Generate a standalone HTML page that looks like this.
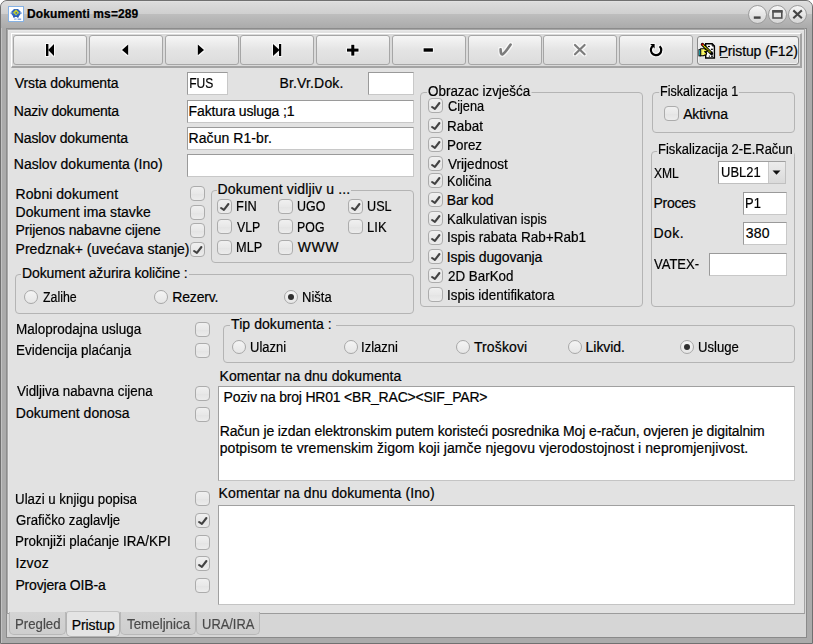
<!DOCTYPE html><html><head><meta charset="utf-8"><style>
*{margin:0;padding:0;box-sizing:border-box}
html,body{width:813px;height:644px;overflow:hidden;background:#fff}
body{position:relative;font-family:"Liberation Sans",sans-serif}
.abs,.t,.cb,.rb,.inp,.grp,.btn,.ta,.tab,.combo{position:absolute}
.t{font-size:14px;line-height:15px;white-space:pre;color:#000;-webkit-text-stroke:0.2px currentColor}
.bold{font-weight:bold;font-size:12px}
.gray{color:#4a4a4a}
.win{position:absolute;left:0;top:0;width:813px;height:644px;background:#ababab;border:1px solid #707070;border-radius:7px 7px 0 0;box-shadow:inset 1px 0 0 #c2c2c2}
.title{position:absolute;left:1px;top:1px;width:811px;height:27px;border-radius:6px 6px 0 0;
 background:linear-gradient(#e6e6e6 0,#dcdcdc 1px,#cfcfcf 13px,#bdbdbd 13.5px,#ababab 27px)}
.ticon{position:absolute;left:8px;top:6px;width:16px;height:16px;background:#fff;border:1px solid #86b2e4;padding:0}
.ticon svg{position:absolute;left:0;top:0}
.tbtn{position:absolute;width:19px;height:19px;border-radius:50%;border:1px solid #9c9c9c;background:linear-gradient(#f6f6f6,#d6d6d6)}
.pane{position:absolute;left:6px;top:28px;width:799px;height:586px;background:#e2e2e2;border:1px solid #8c8c8c;border-right-color:#a4a4a4;border-bottom-color:#9c9c9c;box-shadow:inset 1px 1px 0 #a8a8a8,inset 2px 2px 0 #e8e8e8}
.tbar{position:absolute;left:11px;top:33px;width:791px;height:35px;background:#dadada;border-top:1px solid #fff;border-left:1px solid #fff;border-bottom:2px solid #a4a4a4;border-right:2px solid #a4a4a4}
.btn{border:1px solid #a6a6a6;border-radius:3px;background:linear-gradient(#f6f6f6,#e4e4e4 50%,#dcdcdc)}
.btn2{border-color:#8a8a8a;box-shadow:inset 0 0 0 1px #f0f0f0}
.cb{border:1px solid #acacac;border-radius:4px;background:linear-gradient(#f0f0f0,#e8e8e8 50%,#e4e4e4 55%,#ececec)}
.cb svg{position:absolute;left:-1px;top:-1px}
.rb{border:1px solid #a8a8a8;border-radius:50%;background:linear-gradient(#f4f4f4,#e6e6e6)}
.dot{position:absolute;left:3px;top:3px;width:6px;height:6px;border-radius:50%;background:#303030}
.inp{background:#fff;border:1px solid #c8c8c8;border-top-color:#9a9a9a;border-left-color:#9a9a9a}
.ta{background:#fff;border:1px solid #c4c4c4;border-top-color:#a0a0a0;border-left-color:#a0a0a0}
.grp{border:1px solid #b4b4b4;border-radius:4px}
.gt{background:#e2e2e2;padding:0 1px}
.combo{background:#fff;border:1px solid #c0c0c0;border-top-color:#a0a0a0;border-left-color:#a0a0a0}
.cdrop{position:absolute;right:0;top:0;width:17px;height:21px;background:linear-gradient(#ececec,#dadada);border-left:1px solid #c8c8c8}
.tab{background:linear-gradient(#d4d4d4,#cecece);border:1px solid #b8b8b8;border-top:none;border-radius:0 0 5px 5px}
.tabsel{background:#e4e4e4;border-color:#b4b4b4;border-top:1px solid #c4c4c4;border-radius:3px 3px 5px 5px}
.tabbar{position:absolute;left:6px;top:28px;width:801px;height:610px;background:#d6d6d6;border:1px solid #8a8a8a}
#t0{margin-left:-1px;letter-spacing:0.100px}#t1{margin-left:-1px;letter-spacing:-0.142px}#t2{margin-left:0px;letter-spacing:-0.107px}#t3{margin-left:-1px;letter-spacing:0.167px}#t4{margin-left:-1px;letter-spacing:-0.207px}#t5{margin-left:-1px;letter-spacing:-0.113px}#t6{margin-left:-1px;letter-spacing:0.010px}#t7{margin-left:-1px;transform:scaleX(0.8593);transform-origin:1px 0}#t8{margin-left:-1px;letter-spacing:-0.138px}#t9{margin-left:-1px;letter-spacing:0.064px}#t10{margin-left:-1px;letter-spacing:0.038px}#t11{margin-left:-1px;letter-spacing:0.028px}#t12{margin-left:-1px;letter-spacing:-0.159px}#t13{margin-left:-1px;letter-spacing:0.000px}#t14{margin-left:-2px;letter-spacing:0.162px}#t15{margin-left:-1px;transform:scaleX(0.9143);transform-origin:1px 0}#t16{margin-left:-1px;transform:scaleX(0.8903);transform-origin:1px 0}#t17{margin-left:-1px;transform:scaleX(0.9000);transform-origin:1px 0}#t18{margin-left:0px;transform:scaleX(0.8808);transform-origin:0px 0}#t19{margin-left:-1px;transform:scaleX(0.8800);transform-origin:1px 0}#t20{margin-left:-1px;transform:scaleX(0.9250);transform-origin:1px 0}#t21{margin-left:-1px;transform:scaleX(0.9111);transform-origin:1px 0}#t22{margin-left:0px;letter-spacing:0.550px}#t23{margin-left:-2px;letter-spacing:-0.123px}#t24{margin-left:0px;transform:scaleX(0.8816);transform-origin:0px 0}#t25{margin-left:-1px;letter-spacing:-0.150px}#t26{margin-left:-1px;transform:scaleX(0.9258);transform-origin:1px 0}#t27{margin-left:-1px;transform:scaleX(0.9589);transform-origin:1px 0}#t28{margin-left:0px;transform:scaleX(0.9100);transform-origin:0px 0}#t29{margin-left:-1px;transform:scaleX(0.9595);transform-origin:1px 0}#t30{margin-left:-1px;transform:scaleX(0.9571);transform-origin:1px 0}#t31{margin-left:0px;transform:scaleX(0.9694);transform-origin:0px 0}#t32{margin-left:-1px;transform:scaleX(0.9021);transform-origin:1px 0}#t33{margin-left:-1px;letter-spacing:-0.233px}#t34{margin-left:-1px;transform:scaleX(0.9292);transform-origin:1px 0}#t35{margin-left:-1px;transform:scaleX(0.9683);transform-origin:1px 0}#t36{margin-left:-1px;letter-spacing:-0.121px}#t37{margin-left:0px;transform:scaleX(0.9559);transform-origin:0px 0}#t38{margin-left:-1px;transform:scaleX(0.9577);transform-origin:1px 0}#t39{margin-left:-2px;transform:scaleX(0.8953);transform-origin:2px 0}#t40{margin-left:0px;letter-spacing:-0.183px}#t41{margin-left:-2px;transform:scaleX(0.9257);transform-origin:2px 0}#t42{margin-left:0px;transform:scaleX(0.8621);transform-origin:0px 0}#t43{margin-left:-1px;transform:scaleX(0.9238);transform-origin:1px 0}#t44{margin-left:-1px;letter-spacing:-0.220px}#t45{margin-left:-1px;transform:scaleX(0.9250);transform-origin:1px 0}#t46{margin-left:-1px;letter-spacing:0.500px}#t47{margin-left:0px;letter-spacing:0.250px}#t48{margin-left:0px;transform:scaleX(0.9292);transform-origin:0px 0}#t49{margin-left:-1px;transform:scaleX(0.9628);transform-origin:1px 0}#t50{margin-left:-1px;transform:scaleX(0.9605);transform-origin:1px 0}#t51{margin-left:0px;transform:scaleX(0.9538);transform-origin:0px 0}#t52{margin-left:-1px;letter-spacing:0.014px}#t53{margin-left:-1px;letter-spacing:0.057px}#t54{margin-left:-1px;transform:scaleX(0.9243);transform-origin:1px 0}#t55{margin-left:-1px;transform:scaleX(0.9263);transform-origin:1px 0}#t56{margin-left:0px;letter-spacing:0.129px}#t57{margin-left:-1px;letter-spacing:-0.050px}#t58{margin-left:-1px;transform:scaleX(0.9357);transform-origin:1px 0}#t59{margin-left:-1px;letter-spacing:0.046px}#t60{margin-left:-1px;letter-spacing:-0.209px}#t61{margin-left:-1px;letter-spacing:-0.111px}#t62{margin-left:-1px;letter-spacing:0.070px}#t63{margin-left:-1px;letter-spacing:0.093px}#t64{margin-left:-1px;transform:scaleX(0.9492);transform-origin:1px 0}#t65{margin-left:0px;transform:scaleX(0.9427);transform-origin:0px 0}#t66{margin-left:-1px;transform:scaleX(0.9565);transform-origin:1px 0}#t67{margin-left:-1px;letter-spacing:0.150px}#t68{margin-left:-1px;letter-spacing:-0.177px}#t69{margin-left:-1px;transform:scaleX(0.9426);transform-origin:1px 0}#t70{margin-left:-1px;letter-spacing:-0.083px}#t71{margin-left:0px;transform:scaleX(0.9545);transform-origin:0px 0}#t72{margin-left:-1px;transform:scaleX(0.9196);transform-origin:1px 0}</style></head><body><div class="win"></div>
<div class="title"></div>
<div class="ticon"><svg width="14" height="14" viewBox="0 0 14 14"><path d="M5 2 L9 2 L11.2 4.2 L11.2 7.8 L9 10 L5 10 L2.8 7.8 L2.8 4.2 Z" fill="#2f66c0"/><rect x="1.6" y="5.4" width="11" height="1.4" fill="#4a7ed0"/><circle cx="5" cy="9.8" r="1" fill="#2a5ab0"/><circle cx="8.8" cy="9.8" r="1" fill="#2a5ab0"/><path d="M7 2.6 L10 5.6 L7 8.6 L4 5.6 Z" fill="#c6d22a"/><circle cx="7.3" cy="5.9" r=".9" fill="#2f66c0"/><rect x="5" y="11.6" width="2.6" height="1" fill="#7ea6dc"/><rect x="8.6" y="11.6" width="3.6" height="1.1" fill="#5a8ad8"/></svg></div>
<div id="t0" class="t bold" style="left:28.0px;top:7.3px;">Dokumenti ms=289</div>
<div class="tbtn" style="left:748.0px;top:4.5px"></div>
<div class="tbtn" style="left:768.0px;top:4.5px"></div>
<div class="tbtn" style="left:788.0px;top:4.5px"></div>
<svg class="abs" style="left:748px;top:4px" width="60" height="20" viewBox="0 0 60 20"><rect x="5.8" y="12.4" width="6.8" height="2.4" fill="#454545"/><rect x="25" y="7.4" width="8.8" height="6.6" fill="none" stroke="#505050" stroke-width="1.6"/><rect x="24.2" y="6" width="10.4" height="2.6" fill="#505050"/><path d="M46.1 7.1 L53.1 13.5 M53.1 7.1 L46.1 13.5" stroke="#454545" stroke-width="2.1" stroke-linecap="square"/></svg>
<div class="tabbar"></div>
<div class="pane"></div>
<div class="tbar"></div>
<div class="btn" style="left:13px;top:35px;width:74px;height:30px;"></div>
<div class="btn" style="left:89px;top:35px;width:74px;height:30px;"></div>
<div class="btn" style="left:165px;top:35px;width:74px;height:30px;"></div>
<div class="btn" style="left:240px;top:35px;width:74px;height:30px;"></div>
<div class="btn" style="left:316px;top:35px;width:74px;height:30px;"></div>
<div class="btn" style="left:392px;top:35px;width:74px;height:30px;"></div>
<div class="btn" style="left:468px;top:35px;width:74px;height:30px;"></div>
<div class="btn" style="left:543px;top:35px;width:74px;height:30px;"></div>
<div class="btn" style="left:619px;top:35px;width:74px;height:30px;"></div>
<div class="btn btn2" style="left:697px;top:36px;width:102px;height:29px;"></div>
<svg class="abs" style="left:0;top:0" width="813" height="70" viewBox="0 0 813 70"><g opacity=".75" filter="url(#halo)"><rect x="46" y="44" width="2.4" height="12" fill="#fff"/><path d="M48.2 50 L54 44 L54 56 Z" fill="#fff"/><path d="M122 50 L128.2 44.6 L128.2 55.2 Z" fill="#fff"/><path d="M204 50 L197.8 44.6 L197.8 55.2 Z" fill="#fff"/><path d="M279.6 50 L273 44 L273 56 Z" fill="#fff"/><rect x="279" y="44" width="2.2" height="12" fill="#fff"/><rect x="347" y="48.6" width="11.5" height="3" fill="#fff"/><rect x="351.3" y="44.8" width="3" height="10.8" fill="#fff"/><rect x="423.6" y="48.3" width="9.3" height="3.4" fill="#fff"/><path d="M500.6 49.2 Q500.6 54.6 502.4 54.4 Q504.2 54 510.6 44.6" fill="none" stroke="#fff" stroke-width="2.6" stroke-linecap="round"/><path d="M575 45 L584.6 54.3 M584.6 45 L575 54.3" stroke="#fff" stroke-width="2.2" stroke-linecap="round"/><path d="M659.6 46.2 A5.2 5.2 0 1 1 653.3 45.6" fill="none" stroke="#fff" stroke-width="2.2"/><path d="M650.2 44 L654.6 44 L654.6 48.4 Z" fill="#fff"/></g><rect x="46" y="44" width="2.4" height="12" fill="#000"/><path d="M48.2 50 L54 44 L54 56 Z" fill="#000"/><path d="M122 50 L128.2 44.6 L128.2 55.2 Z" fill="#000"/><path d="M204 50 L197.8 44.6 L197.8 55.2 Z" fill="#000"/><path d="M279.6 50 L273 44 L273 56 Z" fill="#000"/><rect x="279" y="44" width="2.2" height="12" fill="#000"/><rect x="347" y="48.6" width="11.5" height="3" fill="#000"/><rect x="351.3" y="44.8" width="3" height="10.8" fill="#000"/><rect x="423.6" y="48.3" width="9.3" height="3.4" fill="#000"/><path d="M500.6 49.2 Q500.6 54.6 502.4 54.4 Q504.2 54 510.6 44.6" fill="none" stroke="#7c7c7c" stroke-width="2.6" stroke-linecap="round"/><path d="M575 45 L584.6 54.3 M584.6 45 L575 54.3" stroke="#7c7c7c" stroke-width="2.2" stroke-linecap="round"/><path d="M659.6 46.2 A5.2 5.2 0 1 1 653.3 45.6" fill="none" stroke="#000" stroke-width="2.2"/><path d="M650.2 44 L654.6 44 L654.6 48.4 Z" fill="#000"/><defs><filter id="halo" x="-50%" y="-50%" width="200%" height="200%"><feMorphology operator="dilate" radius="1"/><feGaussianBlur stdDeviation=".5"/></filter></defs></svg>
<svg class="abs" style="left:695px;top:38px" width="25" height="24" viewBox="0 0 25 24"><path d="M10.7 5.8 H17.2 L19.4 8 V20 H10.7 Z" fill="#fff" stroke="#000" stroke-width="1.4" stroke-linejoin="miter"/><path d="M17.2 5.8 V8 H19.4" fill="none" stroke="#000" stroke-width="1"/><rect x="12.9" y="7.9" width="2" height="1.2" fill="#000"/><rect x="15.9" y="10.7" width="2" height="1.2" fill="#000"/><rect x="16.4" y="13.6" width="1.2" height="1.2" fill="#000"/><rect x="13.8" y="17.6" width="1.1" height="1.1" fill="#000"/><rect x="16" y="17.6" width="2" height="1.2" fill="#000"/><path d="M7.4 6.4 L16.6 15.6" stroke="#000" stroke-width="3.2" stroke-linecap="round"/><path d="M8 7 L15.4 14.4" stroke="#f0f000" stroke-width="1.4" stroke-dasharray="1.1 .5"/><circle cx="7.5" cy="6.5" r="1" fill="#e00000"/><path d="M5.6 10.8 H9.6 L12.4 12.6 L11.8 13.8 L9.6 13.6 L11.6 15.2 L11 16.8 L8.4 17.6 L5.6 17.8 Z" fill="#f4f040" stroke="#000" stroke-width="1.1" stroke-linejoin="round"/><path d="M6.4 12 H9 M6.6 14.2 H10 M6.6 16.2 H9.4" stroke="#fff" stroke-width=".8" stroke-dasharray=".8 .8"/><rect x="3.9" y="11.6" width="1.8" height="6.3" fill="#30e0f0" stroke="#000" stroke-width=".9"/></svg>
<div id="t1" class="t " style="left:719.6px;top:43.5px;text-decoration:underline;text-decoration-color:transparent">Pristup (F12)</div>
<div class="abs" style="left:720px;top:57px;width:8px;height:1px;background:#222"></div>
<div id="t2" class="t " style="left:14.8px;top:76.1px;">Vrsta dokumenta</div>
<div id="t3" class="t " style="left:280.4px;top:76.1px;">Br.Vr.Dok.</div>
<div id="t4" class="t " style="left:14.8px;top:103.8px;">Naziv dokumenta</div>
<div id="t5" class="t " style="left:14.8px;top:131.1px;">Naslov dokumenta</div>
<div id="t6" class="t " style="left:14.8px;top:157.0px;">Naslov dokumenta (Ino)</div>
<div class="inp" style="left:187px;top:72px;width:41px;height:23px;"></div>
<div id="t7" class="t " style="left:190.0px;top:75.8px;">FUS</div>
<div class="inp" style="left:368px;top:72px;width:46px;height:23px;"></div>
<div class="inp" style="left:187px;top:100px;width:227px;height:23px;"></div>
<div id="t8" class="t " style="left:189.6px;top:103.8px;">Faktura usluga ;1</div>
<div class="inp" style="left:187px;top:127px;width:227px;height:23px;"></div>
<div id="t9" class="t " style="left:189.6px;top:130.6px;">Račun R1-br.</div>
<div class="inp" style="left:187px;top:154px;width:227px;height:23px;"></div>
<div id="t10" class="t " style="left:16.6px;top:186.9px;">Robni dokument</div>
<div class="cb" style="left:190px;top:186px;width:15px;height:15px;"></div>
<div id="t11" class="t " style="left:16.6px;top:204.8px;">Dokument ima stavke</div>
<div class="cb" style="left:190px;top:205px;width:15px;height:15px;"></div>
<div id="t12" class="t " style="left:16.6px;top:222.8px;">Prijenos nabavne cijene</div>
<div class="cb" style="left:190px;top:223px;width:15px;height:15px;"></div>
<div id="t13" class="t " style="left:16.6px;top:241.7px;">Predznak+ (uvećava stanje)</div>
<div class="cb" style="left:190px;top:242px;width:15px;height:15px;"><svg width="15" height="15" viewBox="0 0 15 15"><path d="M4.1 9.0 L6.9 10.9 L11.4 5.0" fill="none" stroke="#424242" stroke-width="2.1" stroke-linecap="round" stroke-linejoin="round"/></svg></div>
<div class="grp" style="left:211px;top:190px;width:203px;height:73px;"></div>
<div id="t14" class="t gt" style="left:218.6px;top:181.6px;">Dokument vidljiv u ...</div>
<div class="cb" style="left:217px;top:199px;width:15px;height:15px;"><svg width="15" height="15" viewBox="0 0 15 15"><path d="M4.1 9.0 L6.9 10.9 L11.4 5.0" fill="none" stroke="#424242" stroke-width="2.1" stroke-linecap="round" stroke-linejoin="round"/></svg></div>
<div id="t15" class="t " style="left:236.7px;top:199.2px;">FIN</div>
<div class="cb" style="left:278px;top:199px;width:15px;height:15px;"></div>
<div id="t16" class="t " style="left:297.7px;top:199.2px;">UGO</div>
<div class="cb" style="left:348px;top:199px;width:15px;height:15px;"><svg width="15" height="15" viewBox="0 0 15 15"><path d="M4.1 9.0 L6.9 10.9 L11.4 5.0" fill="none" stroke="#424242" stroke-width="2.1" stroke-linecap="round" stroke-linejoin="round"/></svg></div>
<div id="t17" class="t " style="left:367.8px;top:199.2px;">USL</div>
<div class="cb" style="left:217px;top:219px;width:15px;height:15px;"></div>
<div id="t18" class="t " style="left:236.7px;top:219.5px;">VLP</div>
<div class="cb" style="left:278px;top:219px;width:15px;height:15px;"></div>
<div id="t19" class="t " style="left:297.7px;top:219.5px;">POG</div>
<div class="cb" style="left:348px;top:219px;width:15px;height:15px;"></div>
<div id="t20" class="t " style="left:367.8px;top:219.5px;">LIK</div>
<div class="cb" style="left:217px;top:240px;width:15px;height:15px;"></div>
<div id="t21" class="t " style="left:236.7px;top:240.2px;">MLP</div>
<div class="cb" style="left:278px;top:240px;width:15px;height:15px;"></div>
<div id="t22" class="t " style="left:297.7px;top:240.2px;">WWW</div>
<div class="grp" style="left:15px;top:274px;width:399px;height:40px;"></div>
<div id="t23" class="t gt" style="left:23.1px;top:266.0px;">Dokument ažurira količine :</div>
<div class="rb" style="left:24px;top:290px;width:14px;height:14px;"></div>
<div id="t24" class="t " style="left:42.8px;top:290.0px;">Zalihe</div>
<div class="rb" style="left:154px;top:290px;width:14px;height:14px;"></div>
<div id="t25" class="t " style="left:173.2px;top:290.0px;">Rezerv.</div>
<div class="rb" style="left:284px;top:290px;width:14px;height:14px;"><div class="dot"></div></div>
<div id="t26" class="t " style="left:302.7px;top:290.0px;">Ništa</div>
<div class="grp" style="left:420px;top:92px;width:223px;height:215px;"></div>
<div id="t27" class="t gt" style="left:427.5px;top:83.9px;">Obrazac izvješća</div>
<div class="cb" style="left:428px;top:98px;width:15px;height:15px;"><svg width="15" height="15" viewBox="0 0 15 15"><path d="M4.1 9.0 L6.9 10.9 L11.4 5.0" fill="none" stroke="#424242" stroke-width="2.1" stroke-linecap="round" stroke-linejoin="round"/></svg></div>
<div id="t28" class="t " style="left:447.8px;top:98.7px;">Cijena</div>
<div class="cb" style="left:428px;top:118px;width:15px;height:15px;"><svg width="15" height="15" viewBox="0 0 15 15"><path d="M4.1 9.0 L6.9 10.9 L11.4 5.0" fill="none" stroke="#424242" stroke-width="2.1" stroke-linecap="round" stroke-linejoin="round"/></svg></div>
<div id="t29" class="t " style="left:447.8px;top:118.9px;">Rabat</div>
<div class="cb" style="left:428px;top:137px;width:15px;height:15px;"><svg width="15" height="15" viewBox="0 0 15 15"><path d="M4.1 9.0 L6.9 10.9 L11.4 5.0" fill="none" stroke="#424242" stroke-width="2.1" stroke-linecap="round" stroke-linejoin="round"/></svg></div>
<div id="t30" class="t " style="left:447.8px;top:137.7px;">Porez</div>
<div class="cb" style="left:428px;top:156px;width:15px;height:15px;"><svg width="15" height="15" viewBox="0 0 15 15"><path d="M4.1 9.0 L6.9 10.9 L11.4 5.0" fill="none" stroke="#424242" stroke-width="2.1" stroke-linecap="round" stroke-linejoin="round"/></svg></div>
<div id="t31" class="t " style="left:447.8px;top:156.5px;">Vrijednost</div>
<div class="cb" style="left:428px;top:173px;width:15px;height:15px;"><svg width="15" height="15" viewBox="0 0 15 15"><path d="M4.1 9.0 L6.9 10.9 L11.4 5.0" fill="none" stroke="#424242" stroke-width="2.1" stroke-linecap="round" stroke-linejoin="round"/></svg></div>
<div id="t32" class="t " style="left:447.8px;top:173.8px;">Količina</div>
<div class="cb" style="left:428px;top:192px;width:15px;height:15px;"><svg width="15" height="15" viewBox="0 0 15 15"><path d="M4.1 9.0 L6.9 10.9 L11.4 5.0" fill="none" stroke="#424242" stroke-width="2.1" stroke-linecap="round" stroke-linejoin="round"/></svg></div>
<div id="t33" class="t " style="left:447.8px;top:192.5px;">Bar kod</div>
<div class="cb" style="left:428px;top:211px;width:15px;height:15px;"><svg width="15" height="15" viewBox="0 0 15 15"><path d="M4.1 9.0 L6.9 10.9 L11.4 5.0" fill="none" stroke="#424242" stroke-width="2.1" stroke-linecap="round" stroke-linejoin="round"/></svg></div>
<div id="t34" class="t " style="left:447.8px;top:211.8px;">Kalkulativan ispis</div>
<div class="cb" style="left:428px;top:230px;width:15px;height:15px;"><svg width="15" height="15" viewBox="0 0 15 15"><path d="M4.1 9.0 L6.9 10.9 L11.4 5.0" fill="none" stroke="#424242" stroke-width="2.1" stroke-linecap="round" stroke-linejoin="round"/></svg></div>
<div id="t35" class="t " style="left:447.8px;top:230.0px;">Ispis rabata Rab+Rab1</div>
<div class="cb" style="left:428px;top:249px;width:15px;height:15px;"><svg width="15" height="15" viewBox="0 0 15 15"><path d="M4.1 9.0 L6.9 10.9 L11.4 5.0" fill="none" stroke="#424242" stroke-width="2.1" stroke-linecap="round" stroke-linejoin="round"/></svg></div>
<div id="t36" class="t " style="left:447.8px;top:249.7px;">Ispis dugovanja</div>
<div class="cb" style="left:428px;top:268px;width:15px;height:15px;"><svg width="15" height="15" viewBox="0 0 15 15"><path d="M4.1 9.0 L6.9 10.9 L11.4 5.0" fill="none" stroke="#424242" stroke-width="2.1" stroke-linecap="round" stroke-linejoin="round"/></svg></div>
<div id="t37" class="t " style="left:447.8px;top:268.5px;">2D BarKod</div>
<div class="cb" style="left:428px;top:287px;width:15px;height:15px;"></div>
<div id="t38" class="t " style="left:447.8px;top:287.8px;">Ispis identifikatora</div>
<div class="grp" style="left:652px;top:92px;width:143px;height:41px;"></div>
<div id="t39" class="t gt" style="left:660.6px;top:84.2px;">Fiskalizacija 1</div>
<div class="cb" style="left:664px;top:106px;width:15px;height:15px;"></div>
<div id="t40" class="t " style="left:683.2px;top:107.2px;">Aktivna</div>
<div class="grp" style="left:651px;top:151px;width:144px;height:156px;"></div>
<div id="t41" class="t gt" style="left:658.8px;top:141.7px;">Fiskalizacija 2-E.Račun</div>
<div id="t42" class="t " style="left:654.1px;top:165.7px;">XML</div>
<div class="combo" style="left:718px;top:161px;width:68px;height:23px;"><div class="cdrop"></div></div>
<svg class="abs" style="left:772px;top:170px" width="10" height="6"><path d="M0.5 0.5 L8.5 0.5 L4.5 4.8 Z" fill="#111"/></svg>
<div id="t43" class="t " style="left:722.3px;top:165.4px;">UBL21</div>
<div id="t44" class="t " style="left:654.4px;top:195.6px;">Proces</div>
<div class="inp" style="left:743px;top:192px;width:44px;height:23px;"></div>
<div id="t45" class="t " style="left:745.8px;top:195.6px;">P1</div>
<div id="t46" class="t " style="left:654.4px;top:226.0px;">Dok.</div>
<div class="inp" style="left:743px;top:222px;width:44px;height:23px;"></div>
<div id="t47" class="t " style="left:745.8px;top:226.0px;">380</div>
<div id="t48" class="t " style="left:654.4px;top:256.7px;">VATEX-</div>
<div class="inp" style="left:709px;top:253px;width:78px;height:23px;"></div>
<div id="t49" class="t " style="left:16.8px;top:321.5px;">Maloprodajna usluga</div>
<div class="cb" style="left:195px;top:322px;width:15px;height:15px;"></div>
<div id="t50" class="t " style="left:16.8px;top:342.7px;">Evidencija plaćanja</div>
<div class="cb" style="left:195px;top:343px;width:15px;height:15px;"></div>
<div id="t51" class="t " style="left:16.8px;top:384.3px;">Vidljiva nabavna cijena</div>
<div class="cb" style="left:195px;top:386px;width:15px;height:15px;"></div>
<div id="t52" class="t " style="left:16.8px;top:406.3px;">Dokument donosa</div>
<div class="cb" style="left:195px;top:407px;width:15px;height:15px;"></div>
<div class="grp" style="left:223px;top:325px;width:572px;height:38px;"></div>
<div id="t53" class="t gt" style="left:231.1px;top:317.2px;padding-right:4px">Tip dokumenta :</div>
<div class="rb" style="left:232px;top:340px;width:14px;height:14px;"></div>
<div id="t54" class="t " style="left:250.8px;top:339.7px;">Ulazni</div>
<div class="rb" style="left:344px;top:340px;width:14px;height:14px;"></div>
<div id="t55" class="t " style="left:362.1px;top:339.7px;">Izlazni</div>
<div class="rb" style="left:456px;top:340px;width:14px;height:14px;"></div>
<div id="t56" class="t " style="left:473.9px;top:339.7px;">Troškovi</div>
<div class="rb" style="left:568px;top:340px;width:14px;height:14px;"></div>
<div id="t57" class="t " style="left:586.6px;top:339.7px;">Likvid.</div>
<div class="rb" style="left:680px;top:340px;width:14px;height:14px;"><div class="dot"></div></div>
<div id="t58" class="t " style="left:698.5px;top:339.7px;">Usluge</div>
<div id="t59" class="t " style="left:220.6px;top:369.0px;">Komentar na dnu dokumenta</div>
<div class="ta" style="left:218px;top:386px;width:577px;height:95px;"></div>
<div id="t60" class="t " style="left:224.5px;top:389.8px;">Poziv na broj HR01 &lt;BR_RAC&gt;&lt;SIF_PAR&gt;</div>
<div id="t61" class="t " style="left:220.7px;top:423.5px;">Račun je izdan elektronskim putem koristeći posrednika Moj e-račun, ovjeren je digitalnim</div>
<div id="t62" class="t " style="left:220.7px;top:440.6px;">potpisom te vremenskim žigom koji jamče njegovu vjerodostojnost i nepromjenjivost.</div>
<div id="t63" class="t " style="left:219.6px;top:485.5px;">Komentar na dnu dokumenta (Ino)</div>
<div class="ta" style="left:218px;top:505px;width:577px;height:100px;"></div>
<div id="t64" class="t " style="left:16.4px;top:492.2px;">Ulazi u knjigu popisa</div>
<div class="cb" style="left:195px;top:491px;width:15px;height:15px;"></div>
<div id="t65" class="t " style="left:16.4px;top:513.3px;">Grafičko zaglavlje</div>
<div class="cb" style="left:195px;top:513px;width:15px;height:15px;"><svg width="15" height="15" viewBox="0 0 15 15"><path d="M4.1 9.0 L6.9 10.9 L11.4 5.0" fill="none" stroke="#424242" stroke-width="2.1" stroke-linecap="round" stroke-linejoin="round"/></svg></div>
<div id="t66" class="t " style="left:16.4px;top:534.2px;">Proknjiži plaćanje IRA/KPI</div>
<div class="cb" style="left:195px;top:535px;width:15px;height:15px;"></div>
<div id="t67" class="t " style="left:16.4px;top:555.8px;">Izvoz</div>
<div class="cb" style="left:195px;top:556px;width:15px;height:15px;"><svg width="15" height="15" viewBox="0 0 15 15"><path d="M4.1 9.0 L6.9 10.9 L11.4 5.0" fill="none" stroke="#424242" stroke-width="2.1" stroke-linecap="round" stroke-linejoin="round"/></svg></div>
<div id="t68" class="t " style="left:16.4px;top:577.5px;">Provjera OIB-a</div>
<div class="cb" style="left:195px;top:578px;width:15px;height:15px;"></div>
<div class="tab" style="left:9px;top:612px;width:57px;height:23px;"></div>
<div class="tab" style="left:120px;top:612px;width:76px;height:23px;"></div>
<div class="tab" style="left:196px;top:612px;width:64px;height:23px;"></div>
<div class="tab tabsel" style="left:66px;top:611px;width:54px;height:26px;"></div>
<div id="t69" class="t gray" style="left:15.6px;top:616.8px;">Pregled</div>
<div id="t70" class="t " style="left:72.7px;top:617.6px;">Pristup</div>
<div id="t71" class="t gray" style="left:127.1px;top:616.8px;">Temeljnica</div>
<div id="t72" class="t gray" style="left:202.8px;top:616.5px;">URA/IRA</div></body></html>
